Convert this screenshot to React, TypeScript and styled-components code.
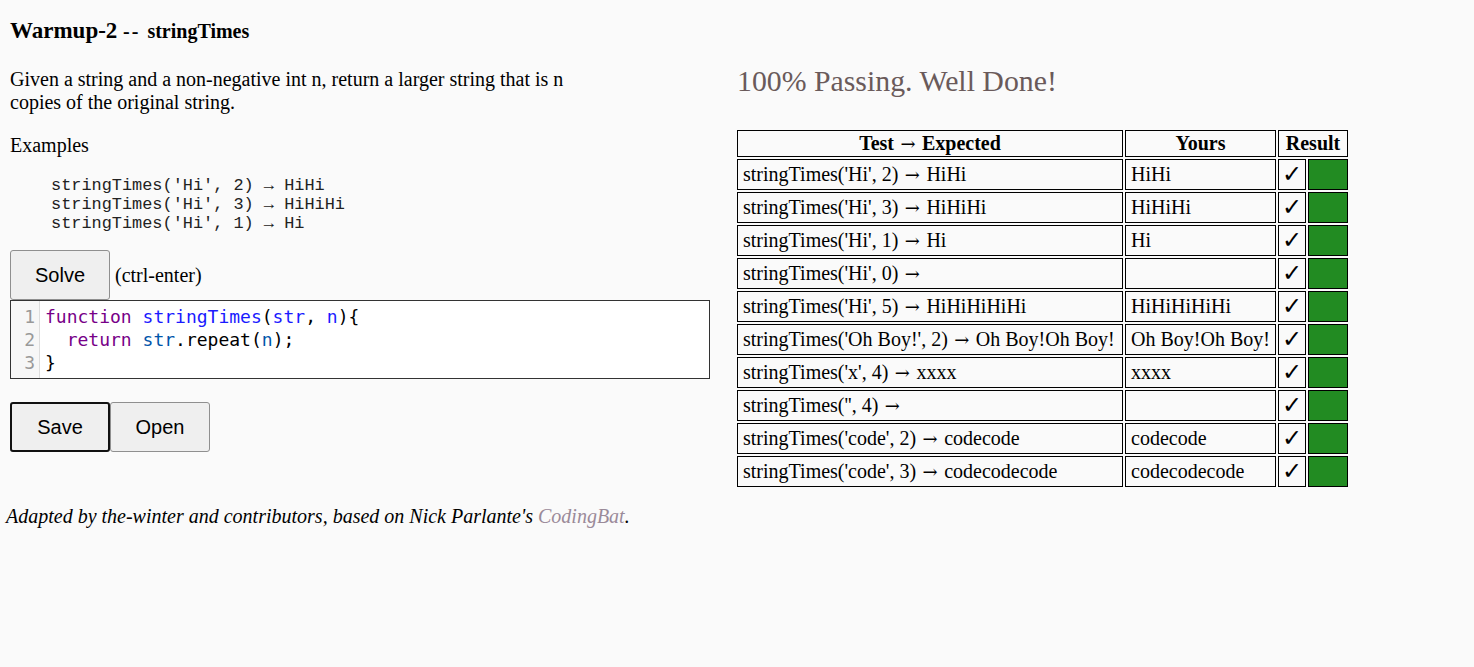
import React from "react";
import styled, { createGlobalStyle } from "styled-components";

const Global = createGlobalStyle`
  html, body { margin: 0; padding: 0; background: #fafafa; }
  body { font-family: "Liberation Serif", "Times New Roman", serif; font-size: 20px; color: #000; }
`;

const Page = styled.div`
  display: flex;
  align-items: flex-start;
  gap: 25px;
  padding: 18px 10px 0 10px;
`;

const Left = styled.div`
  width: 700px;
  display: flex;
  flex-direction: column;
`;

const Right = styled.div`
  display: flex;
  flex-direction: column;
  padding-top: 46px;
`;

const Title = styled.h2`
  margin: 0;
  font-size: 23px;
  line-height: 26px;
  font-weight: bold;
`;

const Sub = styled.span`
  font-size: 20px;
`;

const Dashes = styled.span`
  letter-spacing: 2px;
  margin-right: 2px;
`;

const Desc = styled.p`
  margin: 24px 0 0 0;
  width: 560px;
  line-height: 23px;
`;

const Label = styled.p`
  margin: 20px 0 0 0;
  line-height: 23px;
`;

const Examples = styled.pre`
  margin: 19px 0 0 0;
  padding-left: 41px;
  font-family: "Liberation Mono", "Courier New", monospace;
  font-size: 16.9px;
  line-height: 19px;
  color: #222;
`;

const SolveRow = styled.div`
  margin-top: 17px;
  display: flex;
  align-items: center;
  gap: 5px;
`;

const Button = styled.button<{ $focused?: boolean }>`
  width: 100px;
  height: 50px;
  box-sizing: border-box;
  font-family: "Liberation Sans", Arial, sans-serif;
  font-size: 20px;
  color: #000;
  background: #efefef;
  border: ${(p) => (p.$focused ? "2px solid #111" : "1px solid #8f8f8f")};
  border-radius: 3px;
  padding: 0;
  cursor: pointer;
`;

const Hint = styled.span`
  font-size: 20px;
`;

const Editor = styled.div`
  display: flex;
  border: 1px solid #333;
  background: #fff;
  height: 79px;
  box-sizing: border-box;
`;

const Gutter = styled.div`
  width: 29px;
  background: #f7f7f7;
  border-right: 1px solid #ddd;
  padding: 4px 4px 4px 0;
  box-sizing: border-box;
  font-family: "DejaVu Sans Mono", monospace;
  font-size: 18px;
  line-height: 23px;
  color: #999;
  text-align: right;
`;

const Code = styled.pre`
  margin: 0;
  padding: 4px 5px;
  font-family: "DejaVu Sans Mono", monospace;
  font-size: 18px;
  line-height: 23px;
  color: #000;
`;

const Kw = styled.span`color: #708;`;
const Def = styled.span`color: #1a1aff;`;
const Var = styled.span`color: #05a;`;

const ButtonRow = styled.div`
  margin-top: 23px;
  display: flex;
`;

const Footer = styled.p`
  margin: 16px 0 0 6px;
  font-style: italic;
  line-height: 23px;
`;

const Link = styled.a`
  color: #9a8a99;
  text-decoration: none;
`;

const Status = styled.div`
  font-size: 29.8px;
  line-height: 34px;
  color: #6a5a5a;
  padding-left: 2px;
`;

const Table = styled.table`
  margin-top: 30px;
  table-layout: fixed;
  width: 615px;
  border-spacing: 2px;
  border-collapse: separate;
  font-size: 20px;
`;

const Th = styled.th`
  border: 1px solid #000;
  padding: 1px 5px;
  line-height: 23px;
  font-weight: bold;
  text-align: center;
  white-space: nowrap;
`;

const Td = styled.td`
  border: 1px solid #000;
  padding: 3px 5px;
  line-height: 23px;
  white-space: nowrap;
  overflow: hidden;
`;

const CheckTd = styled(Td)`
  text-align: center;
  padding: 3px 0;
  font-family: "DejaVu Sans", sans-serif;
  font-size: 24px;
  font-weight: bold;
  vertical-align: middle;
`;

const GreenTd = styled(Td)`
  background: #228b22;
  padding: 0;
`;

const Arrow = styled.span`
  display: inline-block;
  width: 1em;
  text-align: center;
  font-family: "DejaVu Serif", serif;
  font-weight: normal;
  font-size: 0.9em;
`;

const tests: [string, string, string][] = [
  ["stringTimes('Hi', 2)", "HiHi", "HiHi"],
  ["stringTimes('Hi', 3)", "HiHiHi", "HiHiHi"],
  ["stringTimes('Hi', 1)", "Hi", "Hi"],
  ["stringTimes('Hi', 0)", "", ""],
  ["stringTimes('Hi', 5)", "HiHiHiHiHi", "HiHiHiHiHi"],
  ["stringTimes('Oh Boy!', 2)", "Oh Boy!Oh Boy!", "Oh Boy!Oh Boy!"],
  ["stringTimes('x', 4)", "xxxx", "xxxx"],
  ["stringTimes('', 4)", "", ""],
  ["stringTimes('code', 2)", "codecode", "codecode"],
  ["stringTimes('code', 3)", "codecodecode", "codecodecode"],
];

export default function App() {
  return (
    <>
      <Global />
      <Page>
        <Left>
          <Title>
            Warmup-2{" "}
            <Sub>
              <Dashes>--</Dashes> stringTimes
            </Sub>
          </Title>
          <Desc>
            Given a string and a non-negative int n, return a larger string that is n copies of the original string.
          </Desc>
          <Label>Examples</Label>
          <Examples>
            {"stringTimes('Hi', 2) → HiHi\nstringTimes('Hi', 3) → HiHiHi\nstringTimes('Hi', 1) → Hi"}
          </Examples>
          <SolveRow>
            <Button>Solve</Button>
            <Hint>(ctrl-enter)</Hint>
          </SolveRow>
          <Editor>
            <Gutter>
              1<br />2<br />3
            </Gutter>
            <Code>
              <Kw>function</Kw> <Def>stringTimes</Def>(<Def>str</Def>, <Def>n</Def>){"{"}
              {"\n  "}
              <Kw>return</Kw> <Var>str</Var>.repeat(<Var>n</Var>);{"\n"}
              {"}"}
            </Code>
          </Editor>
          <ButtonRow>
            <Button $focused>Save</Button>
            <Button>Open</Button>
          </ButtonRow>
        </Left>
        <Right>
          <Status>100% Passing. Well Done!</Status>
          <Table>
            <colgroup>
              <col style={{ width: 386 }} />
              <col style={{ width: 151 }} />
              <col style={{ width: 28 }} />
              <col style={{ width: 40 }} />
            </colgroup>
            <thead>
              <tr>
                <Th>
                  Test <Arrow>→</Arrow> Expected
                </Th>
                <Th>Yours</Th>
                <Th colSpan={2}>Result</Th>
              </tr>
            </thead>
            <tbody>
              {tests.map(([call, exp, yours], i) => (
                <tr key={i}>
                  <Td>
                    {call} <Arrow>→</Arrow> {exp}
                  </Td>
                  <Td>{yours}</Td>
                  <CheckTd>✓</CheckTd>
                  <GreenTd />
                </tr>
              ))}
            </tbody>
          </Table>
        </Right>
      </Page>
      <Footer>
        Adapted by the-winter and contributors, based on Nick Parlante's <Link href="#">CodingBat</Link>.
      </Footer>
    </>
  );
}
